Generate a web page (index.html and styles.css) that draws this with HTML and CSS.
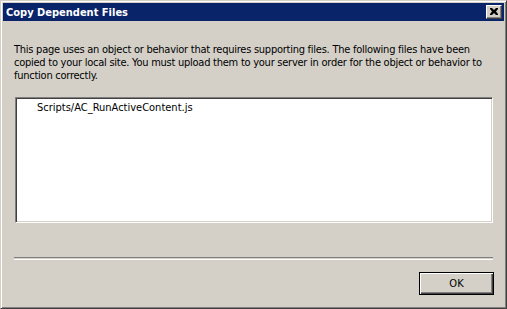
FILE: index.html
```html
<!DOCTYPE html>
<html>
<head>
<meta charset="utf-8">
<link rel="stylesheet" href="styles.css">
</head>
<body>
<div class="window">
  <div class="titlebar">
    <span class="title">Copy Dependent Files</span>
    <button class="close" aria-label="Close">
      <svg width="8" height="7" viewBox="0 0 8 7"><path d="M0 0h2l2 2 2-2h2v1L6 3.5 8 6v1H6L4 5 2 7H0V6l2-2.5L0 1z" fill="#000"/></svg>
    </button>
  </div>
  <div class="content">
    <p class="message">This page uses an object or behavior that requires supporting files. The following files have been copied to your local site. You must upload them to your server in order for the object or behavior to function correctly.</p>
    <div class="listbox">
      <div class="item">Scripts/AC_RunActiveContent.js</div>
    </div>
    <div class="separator"></div>
    <div class="buttons">
      <button class="ok">OK</button>
    </div>
  </div>
</div>
</body>
</html>
```
FILE: styles.css
```css
html, body {
  margin: 0;
  padding: 0;
  background: #d4d0c8;
}
.window {
  box-sizing: border-box;
  width: 507px;
  height: 309px;
  background: #d4d0c8;
  border-top: 1px solid #d4d0c8;
  border-left: 1px solid #d4d0c8;
  border-right: 1px solid #404040;
  border-bottom: 1px solid #404040;
  box-shadow: inset 1px 1px 0 #ffffff, inset -1px -1px 0 #808080;
  padding: 2px;
  display: flex;
  flex-direction: column;
  font-family: "DejaVu Sans Condensed", "Liberation Sans", sans-serif;
  font-size: 11px;
  color: #000;
}
.titlebar {
  height: 18px;
  background: #0a246a;
  display: flex;
  align-items: center;
  justify-content: space-between;
  padding: 0 2px 0 3px;
}
.title {
  color: #fff;
  font-weight: bold;
  font-size: 11px;
}
.close {
  box-sizing: border-box;
  width: 16px;
  height: 14px;
  padding: 0;
  margin: 0;
  background: #d4d0c8;
  border-top: 1px solid #ffffff;
  border-left: 1px solid #ffffff;
  border-right: 1px solid #404040;
  border-bottom: 1px solid #404040;
  box-shadow: inset -1px -1px 0 #808080;
  display: flex;
  align-items: center;
  justify-content: center;
}
.close svg { display: block; margin: 0 1px 1px 0; }
.content {
  flex: 1;
  display: flex;
  flex-direction: column;
  padding: 0 11px 0 11px;
}
.message {
  margin: 22px 0 0 0;
  line-height: 13px;
  letter-spacing: -0.25px;
  color: #000;
}
.listbox {
  box-sizing: border-box;
  margin: 15px 0 0 1px;
  width: 478px;
  height: 126px;
  background: #fff;
  border-top: 1px solid #808080;
  border-left: 1px solid #808080;
  border-right: 1px solid #ffffff;
  border-bottom: 1px solid #ffffff;
  box-shadow: inset 1px 1px 0 #404040, inset -1px -1px 0 #d4d0c8;
  padding: 3px 0 0 21px;
}
.item {
  line-height: 13px;
}
.separator {
  margin-top: 34px;
  width: 479px;
  height: 1px;
  border-top: 1px solid #808080;
  border-bottom: 1px solid #ffffff;
}
.buttons {
  display: flex;
  justify-content: flex-end;
  margin-top: 12px;
}
.ok {
  box-sizing: border-box;
  width: 75px;
  height: 23px;
  margin-right: -1px;
  background: #d4d0c8;
  border: 1px solid #000;
  box-shadow: inset 1px 1px 0 #ffffff, inset -1px -1px 0 #404040, inset -2px -2px 0 #808080;
  font-family: inherit;
  font-size: 11px;
  color: #000;
  padding: 0;
}
```
